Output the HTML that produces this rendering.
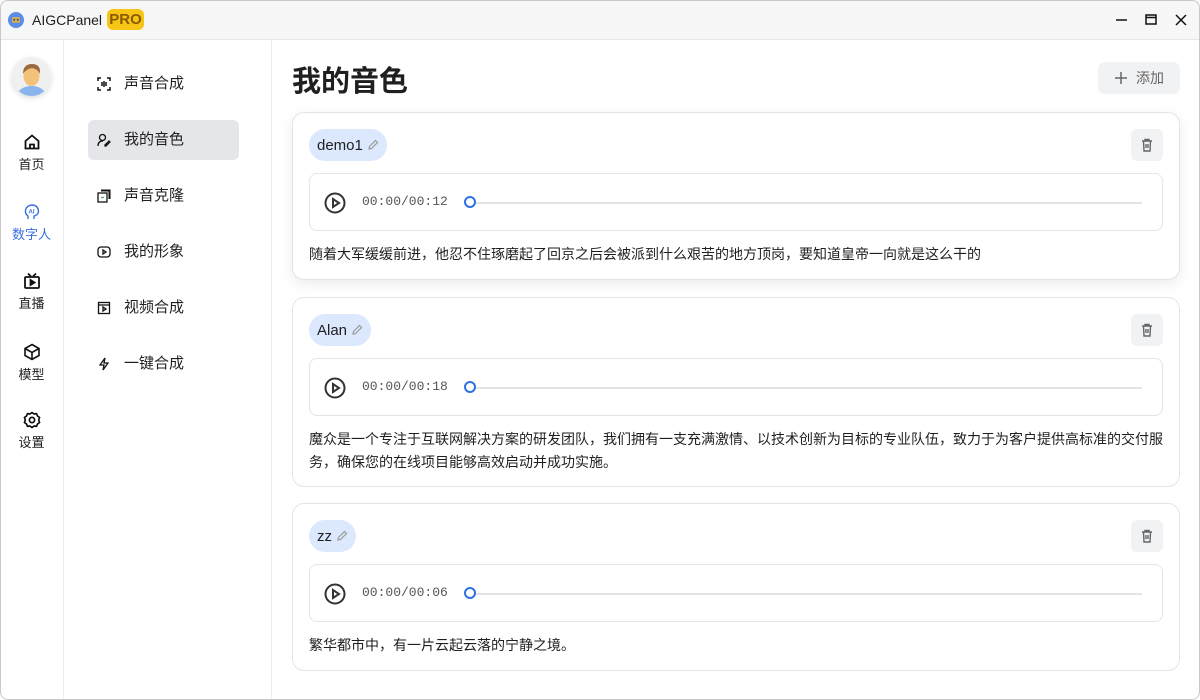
<!DOCTYPE html>
<html><head><meta charset="utf-8"><style>
*{box-sizing:border-box;margin:0;padding:0}
body{width:1200px;height:700px;background:#fff;font-family:"Liberation Sans","Noto Sans CJK SC",sans-serif;color:#1f1f1f;position:relative;overflow:hidden}
.win{position:absolute;left:0;top:0;width:1200px;height:700px;overflow:hidden;background:#fff}
.frame{position:absolute;left:0;top:0;width:1200px;height:700px;border:1px solid #c9c9c9;border-radius:8px;pointer-events:none}
.title{position:absolute;left:0;top:0;width:1200px;height:40px;background:#f7f7f7;border-bottom:1px solid #e6e6e6}
.nav1{position:absolute;left:0;top:40px;width:64px;height:660px;border-right:1px solid #ececec}
.nav2{position:absolute;left:64px;top:40px;width:208px;height:660px;border-right:1px solid #ececec}
.n1{position:absolute;left:0;width:63px;text-align:center;font-size:13px}
.n1 svg{display:block;margin:0 auto 3px}
.n2{position:absolute;left:24px;width:151px;height:40px;border-radius:6px;font-size:15px;line-height:40px;padding-left:36px}
.n2 svg{position:absolute;left:9px;top:13px}
.card{position:absolute;left:292px;width:888px;border:1px solid #e4e4e7;border-radius:12px;background:#fff}
.tag{position:absolute;left:16px;top:16px;height:32px;border-radius:16px;background:#dbe8fd;font-size:15px;padding:0 8px;display:flex;align-items:center;gap:4px}
.del{position:absolute;right:16px;top:16px;width:32px;height:32px;border-radius:6px;background:#f1f2f4}
.del svg{position:absolute;left:10px;top:9px}
.pl{position:absolute;left:16px;right:16px;top:60px;height:58px;border:1px solid #e4e4e7;border-radius:8px}
.pl .t{position:absolute;left:52px;top:20px;font-family:"Liberation Mono",monospace;font-size:13px;color:#555}
.pl .bar{position:absolute;left:160px;right:20px;top:28px;height:2px;background:#e4e4e7}
.pl .dot{position:absolute;left:154px;top:22px;width:12px;height:12px;border:2px solid #2f6fe4;border-radius:50%;background:#fff}
.pl svg{position:absolute;left:13px;top:17px}
.txt{position:absolute;left:16px;right:16px;font-size:14px;line-height:23px;color:#1f1f1f}
</style></head><body><div class="win">
<div class="title">
<svg style="position:absolute;left:8px;top:12px" width="16" height="16"><circle cx="8" cy="8" r="8" fill="#5b8de8"/><rect x="4" y="5" width="8" height="6" rx="1" fill="#c9a96a"/><rect x="5.5" y="7" width="1.5" height="1.5" fill="#333"/><rect x="9" y="7" width="1.5" height="1.5" fill="#333"/></svg>
<span style="position:absolute;left:32px;top:12px;font-size:14px">AIGCPanel</span>
<span style="position:absolute;left:107px;top:9px;height:21px;width:37px;background:#f7c515;border-radius:6px;font-weight:bold;font-size:15px;color:#8a5a00;text-align:center;line-height:21px">PRO</span>
<svg style="position:absolute;left:1112px;top:12px" width="80" height="16" stroke="#111" stroke-width="1.5" fill="none"><path d="M4 8h11"/><rect x="34" y="3" width="10" height="9"/><path d="M34 5.5h10"/><path d="M64 3l10 10M74 3l-10 10"/></svg>
</div>
<div class="nav1">
<div style="position:absolute;left:12px;top:17px;width:39px;height:39px;border-radius:50%;background:#f0f0f0;box-shadow:0 2px 6px rgba(0,0,0,.15);overflow:hidden">
<svg width="39" height="39"><ellipse cx="19.5" cy="38" rx="14" ry="9" fill="#8ab4ee"/><ellipse cx="19.5" cy="19" rx="8" ry="10" fill="#f2c27b"/><path d="M11 17q0-10 9-10q9 0 8 10q-2-5-8-6q-6 1-9 6z" fill="#9a6a42"/></svg></div>
<div class="n1" style="top:93px"><svg width="18" height="18" fill="none" stroke="#111" stroke-width="1.8"><path d="M2.5 8L9 2.5 15.5 8v7.5h-13z"/><path d="M7 15.5v-4h4v4"/></svg>首页</div>
<div class="n1" style="top:163px;color:#3b6fe0"><svg width="18" height="18" fill="none" stroke="#3b6fe0" stroke-width="1.4"><path d="M5 16v-3Q2 11 2.5 7Q4 2 9.5 2Q15 2.5 15.5 8Q15.5 12 11 13v3"/><text x="5.5" y="10.5" font-size="6" fill="#3b6fe0" stroke="none" font-weight="bold">AI</text></svg>数字人</div>
<div class="n1" style="top:232px"><svg width="18" height="18" fill="none" stroke="#111" stroke-width="1.8"><rect x="2" y="5" width="14" height="11" rx="1"/><path d="M5 1.5l3 3M13 1.5l-3 3"/><path d="M7.5 8v5l4-2.5z" fill="#111"/></svg>直播</div>
<div class="n1" style="top:303px"><svg width="18" height="18" fill="none" stroke="#111" stroke-width="1.6"><path d="M9 1.5l7 4v7l-7 4-7-4v-7z"/><path d="M2 5.5l7 4 7-4M9 9.5v7"/></svg>模型</div>
<div class="n1" style="top:371px"><svg width="18" height="18" fill="none" stroke="#111" stroke-width="1.7"><path d="M9 1.5l2 1.5 2.5-.3 1 2.3 2 1.5-.8 2.5.8 2.5-2 1.5-1 2.3-2.5-.3-2 1.5-2-1.5-2.5.3-1-2.3-2-1.5.8-2.5-.8-2.5 2-1.5 1-2.3 2.5.3z"/><circle cx="9" cy="9" r="2.6"/></svg>设置</div>
</div>
<div class="nav2">
<div class="n2" style="top:24px"><svg width="14" height="14" fill="none" stroke="#111" stroke-width="1.5"><path d="M1 4V1h3M10 1h3v3M13 10v3h-3M4 13H1v-3M5 5v4M7 4v6M9 5v4"/></svg>声音合成</div>
<div class="n2" style="top:80px;background:#e5e6ea"><svg width="14" height="14" fill="none" stroke="#111" stroke-width="1.3"><circle cx="5.5" cy="4.5" r="3"/><path d="M1 13q0-5 5-5M8 12l4-4 1 1-4 4H8z"/></svg>我的音色</div>
<div class="n2" style="top:136px"><svg width="14" height="14" fill="none" stroke="#111" stroke-width="1.3"><rect x="1" y="4" width="9" height="9"/><path d="M4 1.5h8.5V10" stroke-width="2"/><path d="M4 8.5h3" stroke="#4caf50"/></svg>声音克隆</div>
<div class="n2" style="top:192px"><svg width="14" height="14" fill="none" stroke="#111" stroke-width="1.3"><rect x="1" y="2" width="12" height="10" rx="3"/><path d="M6 5v4l3-2z"/></svg>我的形象</div>
<div class="n2" style="top:248px"><svg width="14" height="14" fill="none" stroke="#111" stroke-width="1.3"><rect x="1.5" y="1.5" width="11" height="11"/><path d="M1.5 4h11M6 6v4l3-2z"/></svg>视频合成</div>
<div class="n2" style="top:304px"><svg width="14" height="14" fill="none" stroke="#111" stroke-width="1.3"><path d="M8 1L3 8h4l-1 5 5-7H7z"/></svg>一键合成</div>
</div>
<div style="position:absolute;left:292px;top:58px;font-size:29px;font-weight:bold">我的音色</div>
<div style="position:absolute;left:1098px;top:62px;width:82px;height:32px;border-radius:7px;background:#f1f2f4;color:#666;font-size:14px;line-height:32px;padding-left:38px"><svg style="position:absolute;left:16px;top:9px" width="14" height="14" stroke="#666" stroke-width="1.5"><path d="M7 1v12M1 7h12"/></svg>添加</div>

<div class="card" style="top:112px;height:168px;box-shadow:0 4px 14px rgba(0,0,0,.08)">
<div class="tag">demo1<svg width="12" height="12" fill="none" stroke="#999" stroke-width="1.2"><path d="M2 10l.5-2.5L8.5 1.5l2 2-6 6z"/></svg></div>
<div class="del"><svg width="12" height="14" fill="none" stroke="#666" stroke-width="1.4"><path d="M1 3h10M4 3V1.5h4V3M2.5 3l.5 10h6l.5-10M5 6v4M7 6v4"/></svg></div>
<div class="pl"><svg width="24" height="24" fill="none" stroke="#333" stroke-width="2"><circle cx="12" cy="12" r="9.5"/><path d="M10 8v8l6-4z"/></svg><span class="t">00:00/00:12</span><div class="bar"></div><div class="dot"></div></div>
<div class="txt" style="top:130px">随着大军缓缓前进，他忍不住琢磨起了回京之后会被派到什么艰苦的地方顶岗，要知道皇帝一向就是这么干的</div>
</div>

<div class="card" style="top:297px;height:190px">
<div class="tag">Alan<svg width="12" height="12" fill="none" stroke="#999" stroke-width="1.2"><path d="M2 10l.5-2.5L8.5 1.5l2 2-6 6z"/></svg></div>
<div class="del"><svg width="12" height="14" fill="none" stroke="#666" stroke-width="1.4"><path d="M1 3h10M4 3V1.5h4V3M2.5 3l.5 10h6l.5-10M5 6v4M7 6v4"/></svg></div>
<div class="pl"><svg width="24" height="24" fill="none" stroke="#333" stroke-width="2"><circle cx="12" cy="12" r="9.5"/><path d="M10 8v8l6-4z"/></svg><span class="t">00:00/00:18</span><div class="bar"></div><div class="dot"></div></div>
<div class="txt" style="top:130px">魔众是一个专注于互联网解决方案的研发团队，我们拥有一支充满激情、以技术创新为目标的专业队伍，致力于为客户提供高标准的交付服务，确保您的在线项目能够高效启动并成功实施。</div>
</div>

<div class="card" style="top:503px;height:168px">
<div class="tag">zz<svg width="12" height="12" fill="none" stroke="#999" stroke-width="1.2"><path d="M2 10l.5-2.5L8.5 1.5l2 2-6 6z"/></svg></div>
<div class="del"><svg width="12" height="14" fill="none" stroke="#666" stroke-width="1.4"><path d="M1 3h10M4 3V1.5h4V3M2.5 3l.5 10h6l.5-10M5 6v4M7 6v4"/></svg></div>
<div class="pl"><svg width="24" height="24" fill="none" stroke="#333" stroke-width="2"><circle cx="12" cy="12" r="9.5"/><path d="M10 8v8l6-4z"/></svg><span class="t">00:00/00:06</span><div class="bar"></div><div class="dot"></div></div>
<div class="txt" style="top:130px">繁华都市中，有一片云起云落的宁静之境。</div>
</div>
<div class="frame"></div>
</div></body></html>
